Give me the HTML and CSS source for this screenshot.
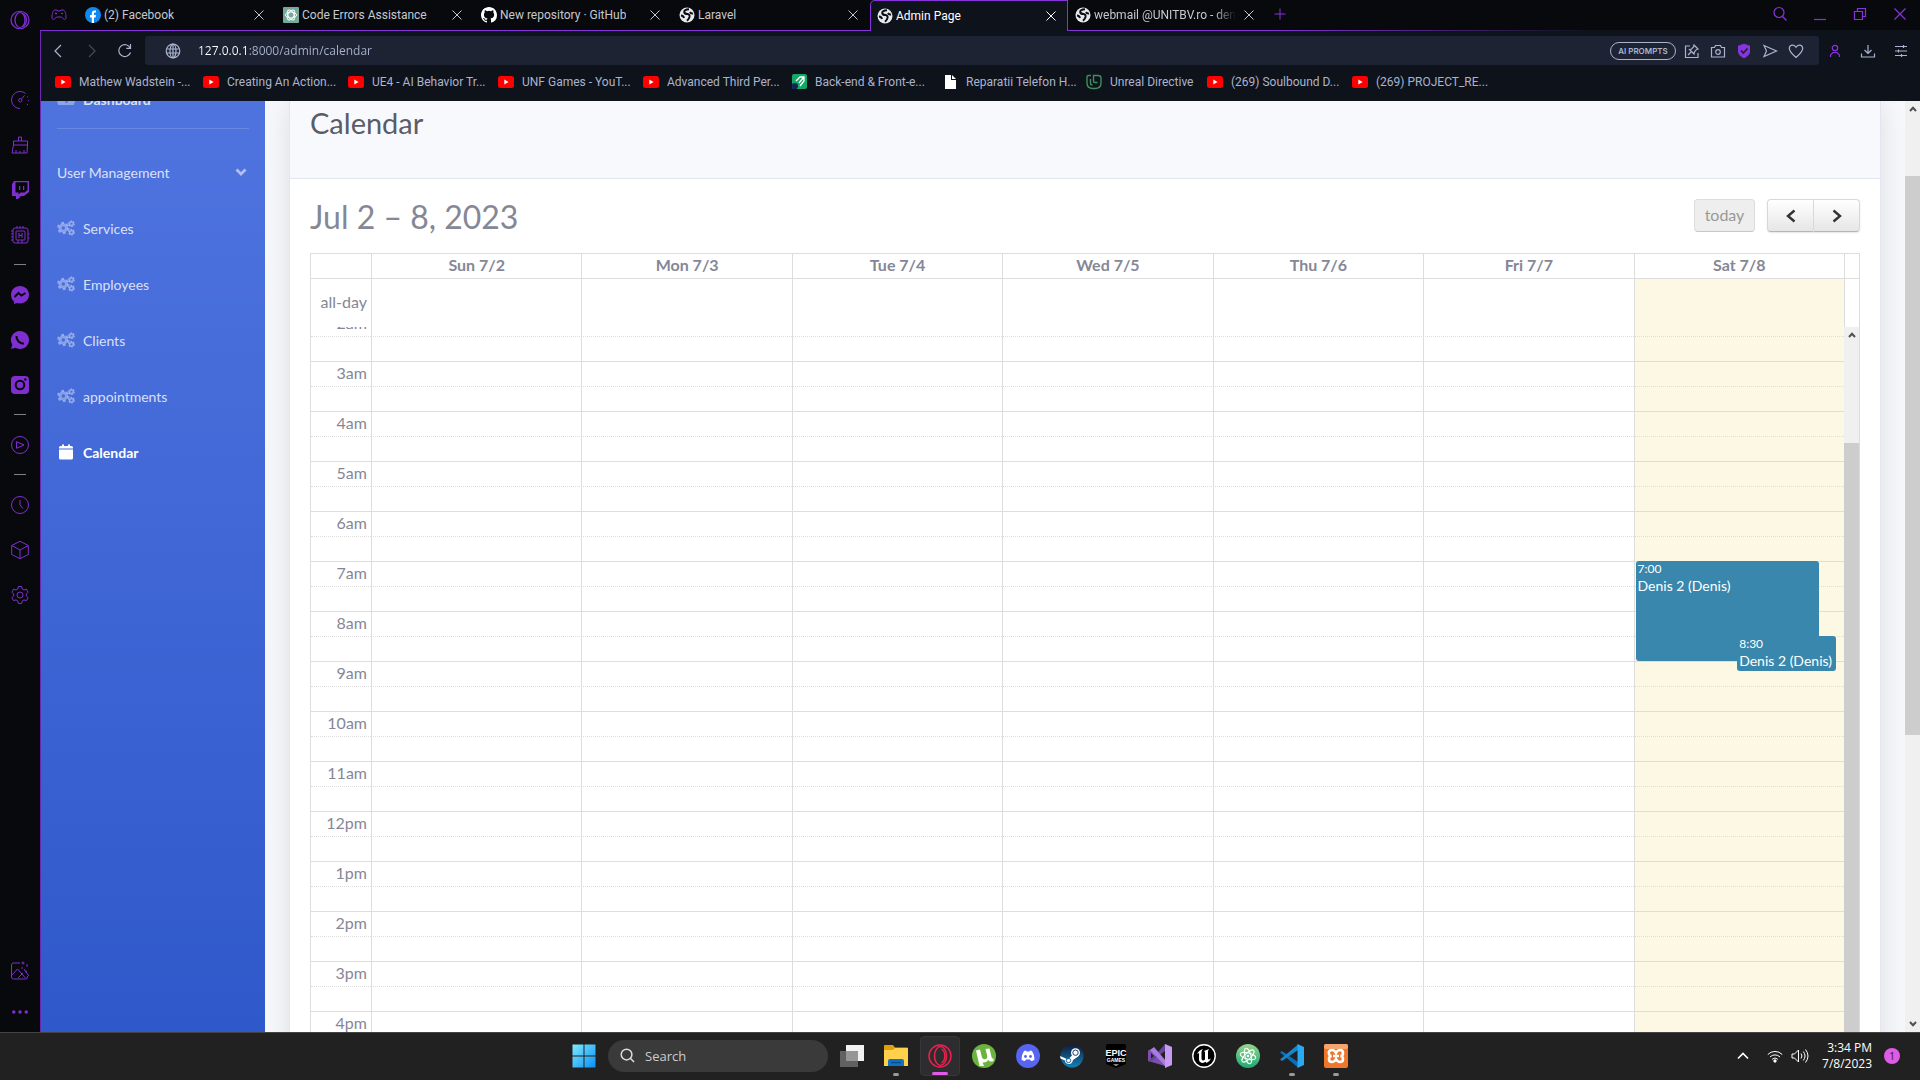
FILE: index.html
```html
<!DOCTYPE html>
<html lang="en">
<head>
<meta charset="utf-8">
<title>Admin Page</title>
<link rel="stylesheet" href="styles.css">
</head>
<body>
<svg class="sprite" aria-hidden="true">
  <symbol id="i-x" viewBox="0 0 10 10"><path d="M.5.5l9 9M9.5.5l-9 9" fill="none" stroke="currentColor"/></symbol>
  <symbol id="i-yt" viewBox="0 0 16 16"><rect y="2" width="16" height="12" rx="2.5" fill="#f00"/><path d="M6.3 5.6v4.8L10.6 8z" fill="#fff"/></symbol>
  <symbol id="i-world" viewBox="0 0 16 16"><circle cx="8" cy="8" r="7.5" fill="#e6e9ee"/><path d="M10 2.200Q5 2.500 5.200 5 5.500 7 8.500 7q2.500.3 2 3-.5 2-2.500 3.800M2 8.500q2.500.3 3 2.500M14 6.500q-2 .5-3-1.500" fill="none" stroke="#0b0d12" stroke-width="2"/></symbol>
  <symbol id="i-opera" viewBox="0 0 24 24"><g fill="none" stroke="currentColor" stroke-width="1.500"><circle cx="12" cy="12" r="11"/><ellipse cx="12.500" cy="12" rx="6" ry="9.500"/><path d="M13.500 5c4.500 3 4.500 11 0 14"/></g></symbol>
  <symbol id="i-cogs" viewBox="0 0 18 16"><g fill="none" stroke="currentColor"><circle cx="6.300" cy="8" r="3.200" stroke-width="3"/><circle cx="6.300" cy="8" r="5.200" stroke-width="2.200" stroke-dasharray="2.800 2.645"/><circle cx="14.500" cy="3.700" r="1.800" stroke-width="1.800"/><circle cx="14.500" cy="3.700" r="2.800" stroke-width="1.300" stroke-dasharray="1.600 1.332"/><circle cx="14.500" cy="12.300" r="1.800" stroke-width="1.800"/><circle cx="14.500" cy="12.300" r="2.800" stroke-width="1.300" stroke-dasharray="1.600 1.332"/></g></symbol>
  <symbol id="i-up" viewBox="0 0 8 6"><path d="M1 5l3-3.200L7 5" fill="none" stroke="#505050" stroke-width="2"/></symbol>
  <symbol id="i-down" viewBox="0 0 8 6"><path d="M1 1l3 3.200L7 1" fill="none" stroke="#505050" stroke-width="2"/></symbol>
</svg>

<div class="window">
  <nav class="rail" aria-label="Browser sidebar">
    <button class="rail-logo" aria-label="Menu"><svg width="20" height="24" viewBox="0 0 20 24" preserveAspectRatio="none"><g fill="none" stroke="currentColor" stroke-width="1.300"><ellipse cx="10" cy="12" rx="9" ry="10.500"/><ellipse cx="10" cy="12" rx="5" ry="9"/><path d="M13 4c4.500 3 4.500 13 0 16"/></g></svg></button>
    <button aria-label="Limiter"><svg viewBox="0 0 20 20"><path d="M10 18.500a8.500 8.500 0 1 1 5.500-15M17.500 6.500v1M18.500 10v1M17.500 14v1M11.500 9l3-3.500"/><circle cx="10.300" cy="10.300" r="1.700"/></svg></button>
    <button aria-label="Cleaner"><svg viewBox="0 0 20 20"><path d="M8.500 6V2h3v4M3.500 6h14v4h-14zM3.500 10l-1.500 8h15l.5-8M6 18v-3M10 18v-2M14 18v-3"/></svg></button>
    <button aria-label="Twitch"><svg viewBox="0 0 20 20"><path class="fill" d="M4 1h15v11l-5 4h-3l-3 3H6v-3H2V4zm1.500 1.200v10.300h3v2l2-2h4l3-2.500V2.200zM9 6h1.200v4H9zm4 0h1.200v4H13z" fill-rule="evenodd"/></svg></button>
    <button aria-label="Hardware"><svg viewBox="0 0 20 20"><rect x="3" y="3" width="15" height="15" rx="2"/><rect x="6" y="6" width="9" height="9" rx="1"/><path d="M9 8v5M12 8v5M9 10.500h3M7 1v2M10 1v2M13 1v2M1 6h2M1 9h2M1 12h2M1 15h2M18 9h1.500M18 13h1.500M8 15v3M12 15v3"/></svg></button>
    <hr>
    <button aria-label="Messenger"><svg viewBox="0 0 20 20"><path class="fill" d="M10 1c5 0 9 3.800 9 8.700S15 18.500 10 18.500l-3-.4L4 19v-2.500C2 15 1 12.500 1 9.700 1 4.800 5 1 10 1z"/><path class="cut" d="M4.500 12l4-4 3 2.500 4-2.500"/></svg></button>
    <button aria-label="WhatsApp"><svg viewBox="0 0 20 20"><path class="fill" d="M10 1a9 9 0 1 1-4.500 16.800L1 19l1.300-4.300A9 9 0 0 1 10 1z"/><path class="cut" d="M6.500 6c-.5 4 3.500 8 7.500 7.500"/></svg></button>
    <button aria-label="Instagram"><svg viewBox="0 0 20 20"><rect class="fill" x="1" y="1" width="18" height="18" rx="4"/><circle class="cut" cx="10" cy="10" r="4.300"/><circle cx="15.300" cy="4.500" r="1.200" fill="#08090d" stroke="none"/></svg></button>
    <hr>
    <button aria-label="Player"><svg viewBox="0 0 20 20"><circle cx="10" cy="10" r="8.500"/><path d="M6.500 6.700v6.600L14 10z"/></svg></button>
    <hr>
    <button aria-label="History"><svg viewBox="0 0 20 20"><circle cx="10" cy="10" r="8.500"/><path d="M10 5v5l3 3.500"/></svg></button>
    <button aria-label="Extensions"><svg viewBox="0 0 20 20"><path d="M10 1.300l8.300 4.200v9L10 18.700l-8.300-4.200v-9zM1.700 5.500L10 10l8.300-4.500M10 10v8.700"/></svg></button>
    <button aria-label="Settings"><svg viewBox="0 0 20 20"><path d="M8.300 1.500h3.400l.5 2.500 1.800 1 2.400-.8 1.700 3L16.300 9v2l1.800 1.700-1.700 3-2.400-.8-1.800 1-.5 2.600H8.300l-.5-2.600-1.800-1-2.400.8-1.700-3L3.700 11V9L1.900 7.200l1.700-3L6 5l1.800-1z"/><circle cx="10" cy="10" r="3"/></svg></button>
    <span class="rail-space"></span>
    <button aria-label="Easy files"><svg viewBox="0 0 20 20"><path d="M10 2H3.500Q1.500 2 1.500 4v12q0 2 2 2h12q2 0 2-2v-1M13 .5v3M11.500 2h3M17 3v3M2 14l5.500-6 8 9M8 17l5-5M11 7h2M14 8l5 7M15 11l2-1"/></svg></button>
    <button aria-label="More"><svg viewBox="0 0 20 20"><g class="fill"><circle cx="3.800" cy="10" r="1.700"/><circle cx="10" cy="10" r="1.700"/><circle cx="16.200" cy="10" r="1.700"/></g></svg></button>
  </nav>

  <div class="browser">
    <header class="tabs">
      <button class="gx" aria-label="GX Corner"><svg width="16" height="12" viewBox="0 0 16 12"><path d="M4 1h2l1 1h2l1-1h2c2 0 3 4 3 7 0 3-2 3-3 1.500L10.500 8h-5L4 9.500C3 11 1 11 1 8c0-3 1-7 3-7zM5 3.500v2M4 4.500h2M10 4.500h2" fill="none" stroke="currentColor"/></svg></button>
      <div class="tab"><a href="#"><svg class="fav" viewBox="0 0 16 16"><circle cx="8" cy="8" r="8" fill="#1187f0"/><path d="M6.800 16v-5.500H5V8h1.800V6.500C6.800 4.300 8 3.500 9.500 3.500l1.500.1v2H10c-.8 0-1 .5-1 1V8h2l-.4 2.500H9V16z" fill="#fff"/></svg><span>(2) Facebook</span></a><button aria-label="Close tab"><svg><use href="#i-x"/></svg></button></div>
      <div class="tab"><a href="#"><svg class="fav" viewBox="0 0 16 16"><rect width="16" height="16" rx="1" fill="#74aa9c"/><g fill="none" stroke="#fff"><ellipse cx="8" cy="8" rx="5.500" ry="3"/><ellipse cx="8" cy="8" rx="5.500" ry="3" transform="rotate(60 8 8)"/><ellipse cx="8" cy="8" rx="5.500" ry="3" transform="rotate(120 8 8)"/></g></svg><span>Code Errors Assistance</span></a><button aria-label="Close tab"><svg><use href="#i-x"/></svg></button></div>
      <div class="tab"><a href="#"><svg class="fav" viewBox="0 0 16 16"><path fill="#fff" d="M8 0C3.580 0 0 3.580 0 8c0 3.540 2.290 6.530 5.470 7.590.4.07.55-.17.55-.38 0-.19-.01-.82-.01-1.490-2.010.37-2.530-.49-2.690-.94-.09-.23-.48-.94-.82-1.130-.28-.15-.68-.52-.01-.53.63-.01 1.080.58 1.230.82.72 1.210 1.870.87 2.330.66.07-.52.28-.87.51-1.070-1.780-.2-3.640-.89-3.640-3.950 0-.87.31-1.590.82-2.150-.08-.2-.36-1.020.08-2.120 0 0 .67-.21 2.200.82a7.600 7.600 0 0 1 4 0c1.530-1.040 2.200-.82 2.200-.82.44 1.100.16 1.920.08 2.120.51.56.82 1.270.82 2.150 0 3.070-1.870 3.750-3.650 3.950.29.25.54.73.54 1.480 0 1.070-.01 1.930-.01 2.200 0 .21.15.46.55.38A8 8 0 0 0 16 8c0-4.420-3.580-8-8-8z"/></svg><span>New repository · GitHub</span></a><button aria-label="Close tab"><svg><use href="#i-x"/></svg></button></div>
      <div class="tab"><a href="#"><svg class="fav"><use href="#i-world"/></svg><span>Laravel</span></a><button aria-label="Close tab"><svg><use href="#i-x"/></svg></button></div>
      <div class="tab active"><a href="#"><svg class="fav"><use href="#i-world"/></svg><span>Admin Page</span></a><button aria-label="Close tab"><svg><use href="#i-x"/></svg></button></div>
      <div class="tab"><a href="#"><svg class="fav"><use href="#i-world"/></svg><span class="fade">webmail @UNITBV.ro - den</span></a><button aria-label="Close tab"><svg><use href="#i-x"/></svg></button></div>
      <div class="strip">
        <button aria-label="New tab"><svg width="12" height="12" viewBox="0 0 12 12"><path d="M6 .5v11M.5 6h11" fill="none" stroke="currentColor"/></svg></button>
        <div class="controls">
          <button aria-label="Search tabs"><svg viewBox="0 0 16 16"><circle cx="7" cy="6.500" r="5"/><path d="M10.500 10.500l4 4"/></svg></button>
          <button aria-label="Minimize"><svg viewBox="0 0 16 16"><path d="M2 13.500h12"/></svg></button>
          <button aria-label="Restore"><svg viewBox="0 0 16 16"><path d="M5.500 5V2.500h8v8H11M2.500 5.500h8v8h-8z"/></svg></button>
          <button aria-label="Close"><svg viewBox="0 0 16 16"><path d="M2.500 2.500l11 11M13.500 2.500l-11 11"/></svg></button>
        </div>
      </div>
    </header>

    <div class="chrome">
      <div class="toolbar">
        <button aria-label="Back"><svg viewBox="0 0 16 16"><path d="M10 2L4 8l6 6"/></svg></button>
        <button class="off" aria-label="Forward" disabled><svg viewBox="0 0 16 16"><path d="M5 2l6 6-6 6"/></svg></button>
        <button aria-label="Reload"><svg viewBox="0 0 16 16"><path d="M13.500 9.500a6 6 0 1 1-.3-4.500M13.500 1v4.300H9.300"/></svg></button>
        <div class="address">
          <svg class="globe" viewBox="0 0 16 16"><circle cx="8" cy="8" r="6.800"/><ellipse cx="8" cy="8" rx="3" ry="6.800"/><path d="M1.500 6h13M1.500 10h13M8 1v14"/></svg>
          <input type="text" value="127.0.0.1:8000/admin/calendar" aria-label="Address">
          <button class="pill">AI PROMPTS</button>
          <button aria-label="Pin"><svg viewBox="0 0 16 16"><path d="M6 3H1.500v11.500H14V10M10 2l4 4-1.500.5-2 2.500-.5 2-4.500-4.500L7.500 6 9.700 3.700zM7.500 8.500L4 12"/></svg></button>
          <button aria-label="Snapshot"><svg viewBox="0 0 16 16"><path d="M1.500 4.500h3l1-2h5l1 2h3v9.500h-13z"/><circle cx="8" cy="9" r="2.300"/></svg></button>
          <button aria-label="Blocker"><svg viewBox="0 0 16 16"><path d="M8 .8l6 2v5.700c0 3-3 5.500-6 6.700-3-1.200-6-3.700-6-6.700V2.800z" fill="#8a33e0" stroke="none"/><path d="M5 7.500l2.300 2.500L11.500 5.500" stroke="#1d2333" stroke-width="1.800"/></svg></button>
          <button aria-label="Send"><svg viewBox="0 0 16 16"><path d="M2 2.500L14.500 8 2 13.500 4.500 8z"/></svg></button>
          <button aria-label="Bookmark"><svg viewBox="0 0 16 16"><path d="M8 14.500C4 11 1.300 8.500 1.300 5.500c0-4 5-4.500 6.700-1.200 1.700-3.300 6.700-2.800 6.700 1.200 0 3-2.700 5.500-6.700 9z"/></svg></button>
        </div>
        <div class="tools">
          <button class="violet" aria-label="Profile"><svg viewBox="0 0 16 16"><circle cx="8" cy="5" r="2.700"/><path d="M3.500 14v-2l2.500-2.500h4l2.500 2.500v2"/></svg></button>
          <button aria-label="Downloads"><svg viewBox="0 0 16 16"><path d="M8 2v8M4.500 7L8 10.500 11.500 7M1.500 10.500v3.500h13v-3.500"/></svg></button>
          <button aria-label="Easy setup"><svg viewBox="0 0 16 16"><path d="M2 3.500h12M2 8h12M2 12.500h12M10.500 2v3M5.500 6.500v3M8.500 11v3"/></svg></button>
        </div>
      </div>

      <nav class="bookmarks" aria-label="Bookmarks">
        <a href="#"><svg><use href="#i-yt"/></svg>Mathew Wadstein -...</a>
        <a href="#"><svg><use href="#i-yt"/></svg>Creating An Action...</a>
        <a href="#"><svg><use href="#i-yt"/></svg>UE4 - AI Behavior Tr...</a>
        <a href="#"><svg><use href="#i-yt"/></svg>UNF Games - YouT...</a>
        <a href="#"><svg><use href="#i-yt"/></svg>Advanced Third Per...</a>
        <a href="#"><svg viewBox="0 0 16 16"><rect x="1" y="0" width="15" height="15" rx="2" fill="#12a866"/><path d="M5 7l4-4h4v4l-4 5M13 3L8 9" fill="none" stroke="#fff" stroke-width="1.300"/><path d="M1 9l5 6H2z" fill="#1a1f5c"/><circle cx="4" cy="12" r="3" fill="#1a1f5c"/></svg>Back-end &amp; Front-e...</a>
        <a href="#"><svg viewBox="0 0 16 16"><path d="M3 1h6v5h5v9H3z" fill="#fff"/><path d="M10 1l4 4h-4z" fill="#fff"/></svg>Reparatii Telefon H...</a>
        <a href="#"><svg viewBox="0 0 16 16"><path d="M5 1.500H2.500q-1.500 0-1.500 2V9q0 5.500 6 5.500h2q6 0 6-5.500V4q0-2.500-3-2.500H7.500V7q0 1.500 1.500 1.500h2.500M4.500 5v4q0 2 2 2" fill="none" stroke="#3d8f60" stroke-width="1.400"/></svg>Unreal Directive</a>
        <a href="#"><svg><use href="#i-yt"/></svg>(269) Soulbound D...</a>
        <a href="#"><svg><use href="#i-yt"/></svg>(269) PROJECT_RE...</a>
      </nav>

      <div class="page">
        <aside class="side">
          <a href="#"><svg viewBox="0 0 18 16"><path d="M9 0a9 9 0 0 1 9 9c0 2-.5 3.500-1.300 5H1.300C.5 12.500 0 11 0 9a9 9 0 0 1 9-9zM3 8v2h2V8zm10 0v2h2V8zM8 2v2h2V2zm2.500 3L8.500 9v3h2l.5-6z" fill="currentColor" fill-rule="evenodd"/></svg><b>Dashboard</b></a>
          <hr>
          <a href="#"><span>User Management</span><svg class="chev" viewBox="0 0 12 8"><path d="M1.500 1.500L6 6l4.500-4.500" fill="none" stroke="currentColor" stroke-width="2.800"/></svg></a>
          <a href="#"><svg><use href="#i-cogs"/></svg><span>Services</span></a>
          <a href="#"><svg><use href="#i-cogs"/></svg><span>Employees</span></a>
          <a href="#"><svg><use href="#i-cogs"/></svg><span>Clients</span></a>
          <a href="#"><svg><use href="#i-cogs"/></svg><span>appointments</span></a>
          <a href="#" class="current"><svg viewBox="0 0 18 16"><path d="M2 5.500h14V14q0 1.500-1.500 1.500h-11Q2 15.500 2 14zM2 4.500V3.500Q2 2 3.500 2H5V.5h2V2h4V.5h2V2h1.500Q16 2 16 3.500v1z" fill="currentColor"/></svg><span>Calendar</span></a>
        </aside>

        <main class="content">
          <section class="card">
            <h1>Calendar</h1>
            <div class="card-body">
              <div class="fc-bar">
                <h2>Jul 2 – 8, 2023</h2>
                <div class="fc-buttons">
                  <button class="today" disabled>today</button>
                  <div class="pair">
                    <button aria-label="Previous week"><svg viewBox="0 0 10 14"><path d="M8.500 1.500L2 7l6.500 5.500"/></svg></button><button aria-label="Next week"><svg viewBox="0 0 10 14"><path d="M1.500 1.500L8 7l-6.500 5.500"/></svg></button>
                  </div>
                </div>
              </div>
              <div class="fc">
                <table class="fc-head">
                  <thead><tr><th class="axis"></th><th>Sun 7/2</th><th>Mon 7/3</th><th>Tue 7/4</th><th>Wed 7/5</th><th>Thu 7/6</th><th>Fri 7/7</th><th>Sat 7/8</th><th class="gutter"></th></tr></thead>
                  <tbody><tr><td class="axis">all-day</td><td></td><td></td><td></td><td></td><td></td><td></td><td class="is-today"></td><td class="gutter"></td></tr></tbody>
                </table>
                <div class="fc-scroll">
                  <div class="fc-grid">
                    <div class="fc-days">
                      <div></div><div></div><div></div><div></div><div></div><div></div>
                      <div class="is-today"></div>
                    </div>
                    <table class="fc-slots"><tbody>
                      <tr><th>2am</th><td></td></tr><tr class="half"><th></th><td></td></tr>
                      <tr><th>3am</th><td></td></tr><tr class="half"><th></th><td></td></tr>
                      <tr><th>4am</th><td></td></tr><tr class="half"><th></th><td></td></tr>
                      <tr><th>5am</th><td></td></tr><tr class="half"><th></th><td></td></tr>
                      <tr><th>6am</th><td></td></tr><tr class="half"><th></th><td></td></tr>
                      <tr><th>7am</th><td></td></tr><tr class="half"><th></th><td></td></tr>
                      <tr><th>8am</th><td></td></tr><tr class="half"><th></th><td></td></tr>
                      <tr><th>9am</th><td></td></tr><tr class="half"><th></th><td></td></tr>
                      <tr><th>10am</th><td></td></tr><tr class="half"><th></th><td></td></tr>
                      <tr><th>11am</th><td></td></tr><tr class="half"><th></th><td></td></tr>
                      <tr><th>12pm</th><td></td></tr><tr class="half"><th></th><td></td></tr>
                      <tr><th>1pm</th><td></td></tr><tr class="half"><th></th><td></td></tr>
                      <tr><th>2pm</th><td></td></tr><tr class="half"><th></th><td></td></tr>
                      <tr><th>3pm</th><td></td></tr><tr class="half"><th></th><td></td></tr>
                      <tr><th>4pm</th><td></td></tr><tr class="half"><th></th><td></td></tr>
                    </tbody></table>
                    <div class="fc-days over">
                      <div></div><div></div><div></div><div></div><div></div><div></div>
                      <div>
                        <a href="#" class="event first"><small>7:00</small>Denis 2 (Denis)</a>
                        <a href="#" class="event second"><small>8:30</small>Denis 2 (Denis)</a>
                      </div>
                    </div>
                  </div>
                  <div class="bar"><svg><use href="#i-up"/></svg><i class="thumb-long"></i></div>
                </div>
              </div>
            </div>
          </section>
        </main>
        <div class="bar"><svg><use href="#i-up"/></svg><i class="thumb"></i><svg><use href="#i-down"/></svg></div>
      </div>
    </div>
  </div>
</div>

<footer class="taskbar">
  <span></span>
  <div class="apps">
    <button aria-label="Start"><svg viewBox="0 0 24 24"><defs><linearGradient id="g-win" x1="0" y1="0" x2="1" y2="1"><stop offset="0" stop-color="#7feaff"/><stop offset="1" stop-color="#0a8ef5"/></linearGradient></defs><path d="M.5.500h11v11H.500zM12.500.500h11v11h-11zM.500 12.500h11v11H.500zM12.500 12.500h11v11h-11z" fill="url(#g-win)"/></svg></button>
    <label class="search"><svg viewBox="0 0 16 16"><circle cx="7" cy="7" r="5.700"/><path d="M11 11l4 4"/></svg><input type="text" placeholder="Search" aria-label="Search"></label>
    <button aria-label="Task view"><svg viewBox="0 0 24 24"><rect x="6" y="1" width="18" height="16" fill="#f2f2f2"/><rect y="7" width="18" height="16" fill="#777" opacity=".75"/></svg></button>
    <button class="open" aria-label="File Explorer"><svg viewBox="0 0 24 24"><path d="M0 2q0-1 1-1h8l2 2.500h12q1 0 1 1V10H0z" fill="#e0a009"/><path d="M0 6h9l2-2h12q1 0 1 1v17H0z" fill="#ffd04c"/><path d="M4 22v-5q0-2 2-2h12q2 0 2 2v5z" fill="#0f72c4"/><path d="M7 18.500h10" stroke="#0a4f92" stroke-width="1.500"/></svg></button>
    <button class="focused" aria-label="Opera GX"><svg class="red"><use href="#i-opera"/></svg></button>
    <button aria-label="uTorrent"><svg viewBox="0 0 24 24"><circle cx="12" cy="12" r="12" fill="#6cb33e"/><path d="M4 6.500l4-1 2 8q1 2.500 3.500 1.500T15 11l-1.500-6 4-.5 2 8.500q.5 2 2 1.500v2.500q-4 1.500-5-1-2.500 3-6 2.500L12 22H7.500z" fill="#fff"/></svg></button>
    <button aria-label="Discord"><svg viewBox="0 0 24 24"><circle cx="12" cy="12" r="12" fill="#5865f2"/><path d="M8 7l2-.500.5 1h3l.5-1 2 .5q2.500 3.500 2.500 8.500-1.500 1.500-3.500 1.500l-1-1.500h-4L9 17q-2 0-3.500-1.500Q5.500 10.500 8 7z" fill="#fff"/><circle cx="9.500" cy="12.500" r="1.400" fill="#5865f2"/><circle cx="14.500" cy="12.500" r="1.400" fill="#5865f2"/></svg></button>
    <button aria-label="Steam"><svg viewBox="0 0 24 24"><defs><linearGradient id="g-st" x2="0" y2="1"><stop offset="0" stop-color="#101c3c"/><stop offset="1" stop-color="#1482b8"/></linearGradient></defs><circle cx="12" cy="12" r="11.500" fill="url(#g-st)"/><path d="M0 12l8 3.500 4-4v-3l6 4-5 3.500q-1 4.500-4.500 4T5 16.500l-4.500-2z" fill="#fff"/><circle cx="15.500" cy="8.700" r="4.500" fill="#fff"/><circle cx="15.500" cy="8.700" r="2.700" fill="#fff" stroke="#14406b" stroke-width="1"/><circle cx="8.500" cy="16.500" r="2.200" fill="none" stroke="#1a6a9c"/></svg></button>
    <button aria-label="Epic Games"><svg viewBox="0 0 24 24"><path d="M2 2q0-2 2-2h16q2 0 2 2v18l-10 4-10-4z" fill="#000"/><text x="12" y="12" class="epic">EPIC</text><text x="12" y="18" class="games">GAMES</text><path d="M9 20.500h6l-3 1.300z" fill="#fff"/></svg></button>
    <button aria-label="Visual Studio"><svg viewBox="0 0 24 24"><path d="M0 6.500L2.500 5.500 17 17v5L2 17.500 0 17z" fill="#7b4fb0"/><path d="M3 9v6l3-3z" fill="#222"/><path d="M2.500 18L0 17l7.500-6L17 0v7z" fill="#654597"/><path d="M2 6l4-3 12 14v6z" fill="#a77ce0"/><path d="M17 0l7 3v18l-7 3z" fill="#c79bf5"/></svg></button>
    <button aria-label="Unreal Engine"><svg viewBox="0 0 24 24"><circle cx="12" cy="12" r="11.200" fill="#000" stroke="#fff" stroke-width="1.400"/><path d="M5 10q2-4 6-5-1.500 1.500-1.500 3v7q.5 1.500 2 1.500l1.500-1V8l-1-1 5-2-1 2v8l1 .500 2-1q-1.500 3.500-4.500 4.500l-1-1.300q-2 1.300-3.500 1.300-3-1-3-3V9z" fill="#fff"/></svg></button>
    <button aria-label="Atom"><svg viewBox="0 0 24 24"><defs><linearGradient id="g-at" x2="0" y2="1"><stop offset="0" stop-color="#94d68c"/><stop offset="1" stop-color="#1fa873"/></linearGradient></defs><circle cx="12" cy="12" r="12" fill="url(#g-at)"/><g fill="none" stroke="#fff"><ellipse cx="12" cy="12" rx="8" ry="3" transform="rotate(15 12 12)"/><ellipse cx="12" cy="12" rx="8" ry="3" transform="rotate(75 12 12)"/><ellipse cx="12" cy="12" rx="8" ry="3" transform="rotate(135 12 12)"/></g><circle cx="12" cy="12" r="1.300" fill="#fff"/></svg></button>
    <button class="open" aria-label="Visual Studio Code"><svg viewBox="0 0 24 24"><path d="M0 8.500L2 7l16 11v5.500z" fill="#0a6fb8"/><path d="M0 15.500L2 17 18 6V.5z" fill="#1587d0"/><path d="M17.500 0L24 3v18l-6.500 3z" fill="#2aa8f2"/></svg></button>
    <button class="open" aria-label="XAMPP"><svg viewBox="0 0 24 24"><rect width="24" height="24" rx="2" fill="#f0762a"/><rect width="24" height="5" rx="2" fill="#f6a56f"/><path d="M8 6q-4 0-3 4 .5 2 2.500 2Q5 12.500 5 15q0 3 3 3 2.500 0 4-3 1.500 3 4 3 3 0 3-3 0-2.500-2.500-3 2.500 0 2.500-3 0-3-3-3-2.500 0-4 3-1.500-3-4-3zM9 12h6" fill="none" stroke="#fff" stroke-width="2.600"/></svg></button>
  </div>
  <div class="tray">
    <svg width="12" height="8" viewBox="0 0 12 8"><path d="M1 6.500l5-5 5 5" stroke-width="1.600"/></svg>
    <svg class="wifi" width="16" height="14" viewBox="0 0 16 14"><path d="M.8 5.500a10 10 0 0 1 14.400 0M3 8a7 7 0 0 1 10 0M5.200 10.300a4 4 0 0 1 5.600 0"/><circle cx="8" cy="12" r="1.200" fill="#fff"/></svg>
    <svg class="sound" width="18" height="16" viewBox="0 0 18 16"><path d="M1 6h2.500L7.500 2v12L3.500 10H1zM10 5.500q2 2.500 0 5M12.300 3.500q3.500 4.500 0 9M14.500 1.500q5 6.500 0 13"/></svg>
    <time>3:34 PM<br>7/8/2023</time>
    <span class="badge">1</span>
  </div>
</footer>
</body>
</html>
```

FILE: styles.css
```css
* { box-sizing: border-box; }
body {
  margin: 0;
  height: 100vh;
  display: flex;
  flex-direction: column;
  overflow: hidden;
  background: #08090d;
  font-family: "Open Sans", "Noto Sans", sans-serif;
  font-size: 12px;
}
a { color: inherit; text-decoration: none; }
button {
  border: 0;
  padding: 0;
  background: none;
  color: inherit;
  font: inherit;
  display: grid;
  place-items: center;
}
svg { display: block; flex: none; }
.sprite { position: absolute; width: 0; height: 0; }

.window { flex: 1; min-height: 0; display: flex; }

/* Browser side rail */
.rail {
  width: 40px;
  display: flex;
  flex-direction: column;
  align-items: center;
  color: #7f2ed0;
  padding-bottom: 8px;
}
.rail button { width: 40px; height: 45px; flex: none; }
.rail svg { width: 20px; height: 20px; fill: none; stroke: currentColor; }
.rail .rail-logo { height: 40px; margin-bottom: 37px; }
.rail .fill { fill: currentColor; stroke: none; }
.rail .cut { stroke: #08090d; stroke-width: 2; }
.rail hr { width: 12px; height: 1px; margin: 7px 0; border: 0; background: currentColor; }
.rail-space { flex: 1; }
.rail-space ~ button { height: 42px; }
.rail-space ~ button:last-child { height: 24px; }
.rail-space ~ button:nth-last-child(2) { margin-bottom: 8px; }

.browser { flex: 1; min-width: 0; display: flex; flex-direction: column; }

/* Tabs */
.tabs { height: 31px; display: flex; flex: none; color: #c5c8cf; font-family: Roboto, "Open Sans", sans-serif; }
.gx { width: 38px; color: #7f2ed0; border-bottom: 1px solid #7f2ed0; }
.tab {
  width: 198px;
  display: flex;
  align-items: center;
  padding: 0 9px 0 7px;
  border-bottom: 1px solid #8733dc;
}
.tab a { flex: 1; min-width: 0; display: flex; align-items: center; gap: 3px; }
.tab span { white-space: nowrap; overflow: hidden; }
.tab .fade { mask-image: linear-gradient(90deg, #000 85%, transparent); }
.fav { width: 16px; height: 16px; }
.tab button { width: 16px; height: 16px; }
.tab button svg { width: 10px; height: 10px; }
.tab.active {
  background: #0e121a;
  color: #fff;
  border: 1px solid #8733dc;
  border-bottom: 0;
  border-radius: 5px 0 0 0;
  padding: 0 8px 0 6px;
}
.strip {
  flex: 1;
  display: flex;
  align-items: center;
  justify-content: space-between;
  padding: 0 8px 2px;
  color: #8733dc;
  border-bottom: 1px solid;
  border-image: linear-gradient(90deg, #8733dc, #0e121a 50%) 1;
}
.controls { display: flex; gap: 16px; }
.controls button { width: 24px; height: 24px; }
.controls svg { width: 16px; height: 16px; fill: none; stroke: currentColor; stroke-width: 1.2; }

.chrome {
  flex: 1;
  min-height: 0;
  display: flex;
  flex-direction: column;
  background: #0e121a;
  border-left: 1px solid #6a28b0;
  color: #aab4cf;
}

/* Toolbar */
.toolbar { display: flex; align-items: center; padding: 5px 11px 0 1px; flex: none; }
.toolbar svg { width: 16px; height: 16px; fill: none; stroke: currentColor; stroke-width: 1.2; }
.toolbar > button { width: 33px; height: 24px; }
.toolbar .off { opacity: .35; }
.address {
  flex: 1;
  height: 29px;
  margin-left: 4px;
  padding: 0 10px 0 20px;
  display: flex;
  align-items: center;
  background: #1d2333;
  border-radius: 3px;
}
.address input {
  flex: 1;
  min-width: 0;
  margin-left: 17px;
  padding: 0;
  border: 0;
  outline: 0;
  font: inherit;
  font-size: 12px;
  background: linear-gradient(90deg, #fff 51px, #aab4cf 51px);
  background-clip: text;
  -webkit-text-fill-color: transparent;
}
.address button { width: 26px; height: 24px; }
.address .pill {
  width: 66px;
  height: 18px;
  margin-right: 3px;
  border: 1px solid currentColor;
  border-radius: 9px;
  font: 600 8px Inter, sans-serif;
}
.tools { display: flex; gap: 17px; padding-left: 8px; }
.tools button { width: 16px; height: 24px; }
.tools .violet { color: #8a33e0; }

/* Bookmarks */
.bookmarks {
  height: 36px;
  flex: none;
  display: grid;
  grid-template-columns: 148px 145px 150px 145px 148px 151px 144px 121px 145px 140px;
  align-items: center;
  padding: 0 0 2px 14px;
  font-family: Roboto, "Open Sans", sans-serif;
}
.bookmarks a { display: flex; align-items: center; gap: 8px; white-space: nowrap; }
.bookmarks svg { width: 16px; height: 16px; }

/* Admin page */
.page {
  flex: 1;
  min-height: 0;
  display: flex;
  overflow: hidden;
  background: #f8f9fc;
  color: #858796;
  font-family: Lato, "Open Sans", sans-serif;
  font-size: 16px;
}
.side {
  width: 224px;
  flex: none;
  padding: 0 16px;
  color: rgba(255, 255, 255, .8);
  background: linear-gradient(180deg, #4e73df 5%, #2f58ca);
  font-size: 14px;
}
.side a { display: flex; align-items: center; gap: 8px; height: 56px; padding-bottom: 2px; }
.side a:first-child { margin-top: -29px; }
.side svg { width: 18px; height: 16px; color: rgba(255, 255, 255, .35); }
.side hr { margin: 0 0 16px; border: 0; border-top: 1px solid rgba(255, 255, 255, .15); }
.side .chev { width: 12px; height: 8px; margin: 0 2px 0 auto; color: rgba(255, 255, 255, .55); }
.side .current { color: #fff; font-weight: 700; }
.side .current svg { color: #fff; }
.content { flex: 1; min-width: 0; padding: 0 24px; overflow: hidden; }
.card {
  background: #fff;
  border: 1px solid #e3e6f0;
  border-top: 0;
  box-shadow: 0 2px 28px rgba(58, 59, 69, .15);
}
.card h1 {
  margin: 0;
  height: 78px;
  padding: 5px 20px 0;
  background: #f8f9fc;
  border-bottom: 1px solid #e3e6f0;
  color: #5a5c69;
  font-size: 29px;
  line-height: 34px;
  font-weight: 400;
}
.card-body { padding: 20px; }
.fc-bar { display: flex; justify-content: space-between; align-items: flex-start; height: 54px; }
.fc-bar h2 { margin: 0; font-size: 32px; line-height: 36px; font-weight: 400; }
.fc-buttons { display: flex; gap: 12px; }
.fc-buttons button { height: 33px; border: 1px solid #d8d8d8; border-bottom-color: #b5b5b5; }
.fc-buttons .today {
  width: 61px;
  padding-bottom: 3px;
  border-radius: 4px;
  background: #eee;
  border-color: #dcdcdc;
  border-bottom-color: #c8c8c8;
  color: #999;
}
.pair { display: flex; box-shadow: 0 1px 2px rgba(0, 0, 0, .1); border-radius: 4px; }
.pair button { width: 47px; background: linear-gradient(#fff, #e6e6e6); border-radius: 4px 0 0 4px; }
.pair button + button { border-left: 0; border-radius: 0 4px 4px 0; width: 46px; }
.pair svg { width: 10px; height: 14px; fill: none; stroke: #333; stroke-width: 2.4; }

/* Week calendar */
.fc { border: 1px solid #ddd; border-bottom: 0; }
.fc table { width: 100%; table-layout: fixed; border-collapse: separate; border-spacing: 0; }
.fc th, .fc td { padding: 0 0 2px; }
.fc-head th, .fc-head td { border-right: 1px solid #ddd; height: 25px; line-height: 22px; }
.fc-head th { border-bottom: 1px solid #ddd; }
.fc-head td { height: 48px; }
.fc .axis { width: 61px; text-align: right; padding-right: 4px; }
.fc-head .gutter { width: 14px; border-right: 0; }
.is-today { background: #fcf8e3; }
.fc-scroll { display: flex; overflow: hidden; }
.fc-grid { flex: 1; position: relative; margin-top: -16px; }
.fc-days {
  position: absolute;
  inset: 0 0 0 60px;
  display: grid;
  grid-template-columns: repeat(7, 1fr);
}
.fc-days > div { border-left: 1px solid #ddd; position: relative; }
.fc-days.over > div { border-color: transparent; }
.fc .fc-slots { position: relative; }
.fc-slots th, .fc-slots td { height: 25px; border-top: 1px solid #ddd; }
.fc .fc-slots th { width: 60px; text-align: right; padding-right: 4px; font-weight: 400; line-height: 22px; }
.fc-slots .half th, .fc-slots .half td { border-top-style: dotted; }
.event {
  position: absolute;
  padding: 1px 2px;
  overflow: hidden;
  background: #3a87ad;
  border-radius: 3px;
  color: #fff;
  font-size: 14px;
  line-height: 20px;
  white-space: nowrap;
}
.event small { display: block; font-size: 12px; line-height: 14px; }
.event.first { left: 1px; right: 12%; top: 250px; height: 100px; }
.event.second { left: 49%; right: 4%; top: 325px; height: 35px; }

/* Scroll bars */
.bar {
  width: 15px;
  flex: none;
  display: flex;
  flex-direction: column;
  align-items: center;
  background: #f0f0f0;
}
.bar svg { width: 8px; height: 6px; margin: 5px 0; }
.bar i { width: 15px; background: #cdcdcd; }
.thumb-long { margin-top: 100px; flex: 1; }
.bar .thumb { height: 60%; margin: 59px 0 auto; }

/* Taskbar */
.taskbar {
  height: 48px;
  flex: none;
  display: grid;
  grid-template-columns: 1fr auto 1fr;
  padding-bottom: 2px;
  background: #212121;
  border-top: 1px solid #444;
  color: #fff;
}
.apps { display: flex; align-items: center; gap: 4px; }
.apps button { width: 40px; height: 40px; border-radius: 4px; position: relative; }
.apps button svg { width: 24px; height: 24px; }
.apps .focused { background: #2d2d30; border: 1px solid #37373a; }
.apps .red { color: #e8214d; }
.apps .open::after, .apps .focused::after {
  content: "";
  position: absolute;
  bottom: 0;
  width: 6px;
  height: 3px;
  border-radius: 2px;
  background: #9a9a9a;
}
.apps .focused::after { width: 16px; background: #e05be6; }
.epic { font: 700 9px "Liberation Sans", sans-serif; fill: #fff; text-anchor: middle; }
.games { font: 700 5px "Liberation Sans", sans-serif; fill: #fff; text-anchor: middle; }
.search {
  width: 220px;
  height: 32px;
  display: flex;
  align-items: center;
  gap: 10px;
  padding: 0 12px;
  border-radius: 16px;
  background: #3a3a3a;
}
.search svg { width: 15px; height: 15px; fill: none; stroke: #ddd; stroke-width: 1.6; }
.search input { width: 120px; padding: 0; border: 0; outline: 0; background: none; font: inherit; font-size: 13px; color: #fff; }
.search input::placeholder { color: #ccc; }
.tray { display: flex; align-items: center; justify-content: flex-end; padding-right: 20px; }
.tray svg { fill: none; stroke: #fff; }
.tray .wifi { margin-left: 18px; }
.tray .sound { margin-left: 8px; }
.tray time { width: 63px; text-align: right; line-height: 16px; }
.badge {
  width: 16px;
  height: 16px;
  margin-left: 12px;
  border-radius: 50%;
  background: #e05be6;
  color: #222;
  font-size: 10px;
  line-height: 16px;
  text-align: center;
}
```
